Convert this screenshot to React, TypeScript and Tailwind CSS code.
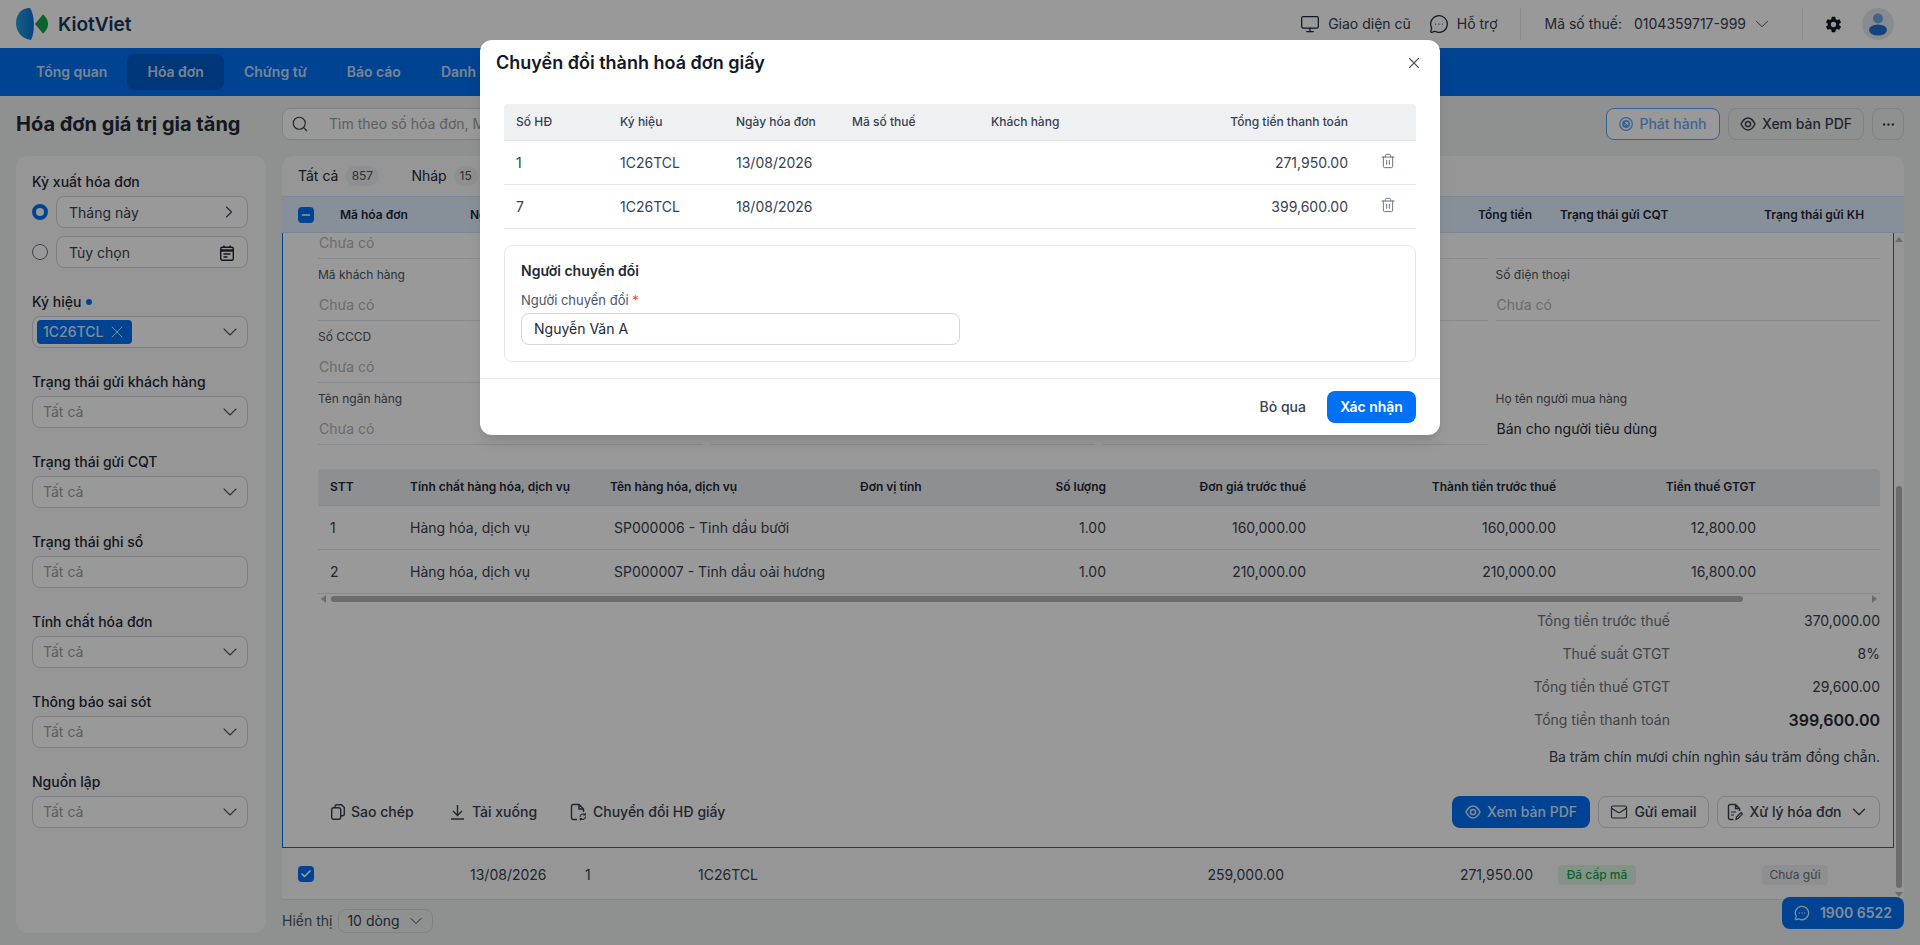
import { Check, ChevronDown, ChevronRight, Mail, MessageCircleMore, Minus, Monitor, MoreHorizontal, Search, Trash2, X } from "lucide-react";
import { IoSettingsSharp } from "react-icons/io5";

const itemCols = "grid grid-cols-[92px_200px_250px_130px_116px_200px_250px_200px_1fr] items-center";
const paperCols = "grid grid-cols-[104px_116px_116px_139px_200px_157px_1fr] items-center";

const filters = ["Trạng thái gửi khách hàng", "Trạng thái gửi CQT", "Trạng thái ghi sổ", "Tính chất hóa đơn", "Thông báo sai sót", "Nguồn lập"];

const items = [
  { no: 1, name: "SP000006 - Tinh dầu bưởi", price: "160,000.00", total: "160,000.00", tax: "12,800.00" },
  { no: 2, name: "SP000007 - Tinh dầu oải hương", price: "210,000.00", total: "210,000.00", tax: "16,800.00" },
];

const totals = [
  ["Tổng tiền trước thuế", "370,000.00"],
  ["Thuế suất GTGT", "8%"],
  ["Tổng tiền thuế GTGT", "29,600.00"],
];

const papers = [
  { no: "1", date: "13/08/2026", amount: "271,950.00" },
  { no: "7", date: "18/08/2026", amount: "399,600.00" },
];

function Logo() {
  return (
    <div className="flex items-center gap-[10px]">
      <svg width="32" height="32" viewBox="0 0 32 32">
        <defs>
          <linearGradient id="lens" x1="0" x2="1" y1="0" y2="0">
            <stop offset="0" stopColor="#26a0d6" />
            <stop offset="1" stopColor="#0a6fe0" />
          </linearGradient>
        </defs>
        <path d="M12 0 C4 1 0 8 0 15 C0 24 6 31 15 32 C19 25 19 7 14 0 Z" fill="url(#lens)" />
        <path d="M19 16 L27 6.5 C31 10 32 13 32 16 C32 19 31 22 27 25.5 Z" fill="#16a34a" />
      </svg>
      <span className="text-[19px] font-semibold leading-none text-[#0f3a66]">KiotViet</span>
    </div>
  );
}

function Avatar() {
  return (
    <div className="flex h-8 w-8 items-center justify-center rounded-full bg-[#e3e8ef]">
      <svg width="18" height="24" viewBox="0 0 18 24">
        <circle cx="9" cy="6.5" r="5" fill="#6fa5e8" />
        <ellipse cx="9" cy="18" rx="9" ry="5.5" fill="#1f6fd6" />
      </svg>
    </div>
  );
}

function EyeRing() {
  return (
    <svg width="16" height="14" viewBox="0 0 16 14" fill="none" stroke="currentColor" strokeWidth="1.5">
      <path d="M1 7C3 3 5.5 1 8 1s5 2 7 6c-2 4-4.5 6-7 6s-5-2-7-6Z" />
      <circle cx="8" cy="7" r="2.6" />
    </svg>
  );
}

function SelectBox({ text }: { text: string }) {
  return (
    <div className="flex h-8 items-center justify-between rounded-lg border border-[#d4d7dc] bg-white pl-[10px] pr-[5px] text-sm text-[#9aa0a8]">
      {text}
      <ChevronDown size={24} strokeWidth={1.1} className="text-[#4b5563]" />
    </div>
  );
}

function Radio({ on }: { on?: boolean }) {
  return on ? (
    <span className="h-4 w-4 shrink-0 rounded-full border-[4px] border-[#0070f4] bg-white" />
  ) : (
    <span className="h-4 w-4 shrink-0 rounded-full border border-[#6b7280] bg-white" />
  );
}

function Sidebar() {
  return (
    <aside className="flex h-[777px] w-[250px] shrink-0 flex-col gap-6 rounded-xl bg-[#fbfbfb] pl-4 pr-[18px] pt-4 text-sm">
      <div>
        <div className="mb-1 h-5 font-medium leading-5 text-[#1f2937]">Kỳ xuất hóa đơn</div>
        <div className="flex flex-col gap-2">
          <div className="flex items-center gap-2">
            <Radio on />
            <div className="flex h-8 flex-1 items-center justify-between rounded-lg border border-[#d4d7dc] bg-white pl-3 pr-2 pt-px text-[#374151]">
              Tháng này
              <ChevronRight size={20} strokeWidth={1.3} className="-mt-[2px]" />
            </div>
          </div>
          <div className="flex items-center gap-2">
            <Radio />
            <div className="flex h-8 flex-1 items-center justify-between rounded-lg border border-[#d4d7dc] bg-white pl-3 pr-[13px] pt-px text-[#374151]">
              Tùy chọn
              <svg width="14" height="16" viewBox="0 0 14 16" fill="none" stroke="#1f2937" strokeWidth="1.4">
                <rect x="0.7" y="2.2" width="12.6" height="13" rx="1.5" />
                <path d="M0.7 5.5H13.3" strokeWidth="2.4" />
                <path d="M4 0.5V3M10 0.5V3M3.5 9H10.5M3.5 12H7.5" />
              </svg>
            </div>
          </div>
        </div>
      </div>
      <div>
        <div className="mb-1 flex h-5 items-center gap-[5px] font-medium text-[#1f2937]">
          Ký hiệu <span className="h-[6px] w-[6px] rounded-full bg-[#0070f4]" />
        </div>
        <div className="flex h-8 items-center justify-between rounded-lg border border-[#d4d7dc] bg-white pl-1 pr-[5px]">
          <span className="flex h-6 w-[95px] items-center gap-[4px] rounded bg-[#0070f4] pl-[6px] font-medium text-[#d6e8ff]">
            1C26TCL
            <X size={20} strokeWidth={1.2} />
          </span>
          <ChevronDown size={24} strokeWidth={1.1} className="text-[#4b5563]" />
        </div>
      </div>
      {filters.map((label) => (
        <div key={label}>
          <div className="mb-1 h-5 font-medium leading-5 text-[#1f2937]">{label}</div>
          {label === "Trạng thái ghi sổ" ? (
            <div className="flex h-8 items-center rounded-lg border border-[#d4d7dc] bg-white pl-[10px] text-[#9aa0a8]">Tất cả</div>
          ) : (
            <SelectBox text="Tất cả" />
          )}
        </div>
      ))}
    </aside>
  );
}

function Field({ label, value, dark, plain }: { label?: string; value?: string; dark?: boolean; plain?: boolean }) {
  if (plain) return <div />;
  return (
    <div className="pt-[6px]">
      <div className="h-5 text-xs leading-5 text-[#4b5563]">{label}</div>
      <div className={`h-9 border-b pt-[5px] pl-px text-sm leading-[30px] ${dark ? "border-transparent text-[#1f2937]" : "border-[#e5e7eb] text-[#b0b4ba]"}`}>{value || "Chưa có"}</div>
    </div>
  );
}

function Expanded() {
  return (
    <div className="h-[615px] border-x border-b border-[#0070f4] bg-white pl-[35px] pr-[13px]">
      <div className="grid grid-cols-4 gap-x-2">
        {[0, 1, 2, 3].map((i) => (
          <div key={i} className="h-[26px] border-b border-[#e5e7eb] pl-px text-sm leading-5 text-[#b0b4ba]">
            {i === 0 ? "Chưa có" : ""}
          </div>
        ))}
        <Field label="Mã khách hàng" />
        <Field label="Địa chỉ" />
        <Field label="Email" />
        <Field label="Số điện thoại" />
        <Field label="Số CCCD" />
        <Field plain />
        <Field plain />
        <Field plain />
        <Field label="Tên ngân hàng" />
        <Field label="Số tài khoản" />
        <Field label="Tên đơn vị" />
        <Field label="Họ tên người mua hàng" value="Bán cho người tiêu dùng" dark />
      </div>

      <div className={`${itemCols} mt-6 h-[37px] rounded-t border-b border-[#e3e5e8] bg-[#eceef1] text-xs font-semibold text-[#1f2937]`}>
        <span className="pl-3">STT</span>
        <span>Tính chất hàng hóa, dịch vụ</span>
        <span>Tên hàng hóa, dịch vụ</span>
        <span>Đơn vị tính</span>
        <span className="text-right">Số lượng</span>
        <span className="text-right">Đơn giá trước thuế</span>
        <span className="text-right">Thành tiền trước thuế</span>
        <span className="text-right">Tiền thuế GTGT</span>
      </div>
      {items.map((row) => (
        <div key={row.no} className={`${itemCols} h-11 border-b border-[#e5e7eb] text-sm text-[#374151]`}>
          <span className="pl-3">{row.no}</span>
          <span>Hàng hóa, dịch vụ</span>
          <span className="pl-1">{row.name}</span>
          <span />
          <span className="text-right">1.00</span>
          <span className="text-right">{row.price}</span>
          <span className="text-right">{row.total}</span>
          <span className="text-right">{row.tax}</span>
        </div>
      ))}
      <div className="flex h-[10px] items-center justify-between px-[3px]">
        <span className="h-0 w-0 border-y-[4px] border-r-[5px] border-y-transparent border-r-[#b5b5b5]" />
        <span className="ml-[5px] mr-auto h-[6px] w-[1412px] rounded-full bg-[#b5b5b5]" />
        <span className="h-0 w-0 border-y-[4px] border-l-[5px] border-y-transparent border-l-[#b5b5b5]" />
      </div>

      <div className="flex flex-col">
        {totals.map(([label, value]) => (
          <div key={label} className="flex h-[33px] items-center justify-end text-sm">
            <span className="text-[#6b7280]">{label}</span>
            <span className="w-[210px] text-right text-[#374151]">{value}</span>
          </div>
        ))}
        <div className="flex h-[33px] items-center justify-end">
          <span className="text-sm text-[#6b7280]">Tổng tiền thanh toán</span>
          <span className="w-[210px] text-right text-base font-semibold text-[#1f2937]">399,600.00</span>
        </div>
      </div>
      <div className="mt-[11px] h-5 text-right text-sm leading-5 text-[#374151]">Ba trăm chín mươi chín nghìn sáu trăm đồng chẵn.</div>

      <div className="mt-[29px] flex items-center justify-between text-sm font-medium text-[#374151]">
        <div className="flex items-center pl-[13px]">
          <span className="flex w-[119px] items-center gap-[6px]">
            <svg width="14" height="16" viewBox="0 0 14 16" fill="none" stroke="#374151" strokeWidth="1.4">
              <rect x="0.7" y="3.8" width="9" height="11.5" rx="2" />
              <path d="M4 3.5V2.5A1.8 1.8 0 0 1 5.8 0.7H10.5L13.3 3.5V10A1.8 1.8 0 0 1 11.5 11.8H9.7" />
            </svg>
            Sao chép
          </span>
          <span className="flex w-[120px] items-center gap-[7px]">
            <svg width="15" height="16" viewBox="0 0 15 16" fill="none" stroke="#374151" strokeWidth="1.4">
              <path d="M7.5 1V11M3 7l4.5 4.5L12 7M1 15H14" />
            </svg>
            Tải xuống
          </span>
          <span className="flex items-center gap-[6px]">
            <svg width="17" height="18" viewBox="0 0 17 18" fill="none" stroke="#374151" strokeWidth="1.4">
              <path d="M7 16.5H3a1.5 1.5 0 0 1-1.5-1.5V3A1.5 1.5 0 0 1 3 1.5h6L13.5 6v3M9 1.5V6h4.5" />
              <path d="M10 14a3 3 0 0 1 5-2.2M15.5 13.5a3 3 0 0 1-5 2.2M15.3 10v2h-2M10.2 17.5v-2h2" strokeWidth="1.1" />
            </svg>
            Chuyển đổi HĐ giấy
          </span>
        </div>
        <div className="flex items-center gap-2">
          <span className="flex h-8 w-[138px] items-center justify-center gap-[6px] rounded-lg bg-[#0070f4] text-[#dbeaff]">
            <EyeRing /> Xem bản PDF
          </span>
          <span className="flex h-8 w-[111px] items-center justify-center gap-[6px] rounded-lg border border-[#d4d7dc]">
            <Mail size={18} strokeWidth={1.6} /> Gửi email
          </span>
          <span className="flex h-8 w-[163px] items-center justify-center gap-[6px] rounded-lg border border-[#d4d7dc]">
            <svg width="16" height="18" viewBox="0 0 16 18" fill="none" stroke="#374151" strokeWidth="1.4">
              <path d="M6.5 16.5H3a1.5 1.5 0 0 1-1.5-1.5V3A1.5 1.5 0 0 1 3 1.5h5.5L12.5 5.5V8M8.5 1.5V5.5h4" />
              <path d="M4 9H9M4 12H7" strokeWidth="1.2" />
              <path d="M9 16.5L9.5 14L14 9.5L15.5 11L11 15.5Z" strokeWidth="1.2" />
            </svg>
            Xử lý hóa đơn
            <ChevronDown size={22} strokeWidth={1.4} />
          </span>
        </div>
      </div>
    </div>
  );
}

function InvoicePanel() {
  return (
    <div className="flex h-[744px] flex-col overflow-hidden rounded-t-xl border-b border-[#dfe1e3] bg-[#fbfbfb]">
      <div className="flex h-10 items-center gap-8 pl-4 text-sm text-[#1f2937]">
        <span className="flex items-center gap-[7px]">
          Tất cả <span className="flex h-5 w-[34px] items-center justify-center rounded-full bg-[#eceef1] text-xs text-[#4b5563]">857</span>
        </span>
        <span className="flex items-center gap-[7px]">
          Nháp <span className="flex h-5 w-6 items-center justify-center rounded-full bg-[#eceef1] text-xs text-[#4b5563]">15</span>
        </span>
      </div>
      <div className="flex h-[37px] shrink-0 items-center border-y border-[#cfe3f8] bg-[#e2f0ff] pl-4 text-xs font-semibold text-[#1f2937]">
        <span className="flex h-4 w-4 items-center justify-center rounded bg-[#0070f4] text-white">
          <Minus size={12} strokeWidth={3} />
        </span>
        <span className="ml-[26px] w-[130px]">Mã hóa đơn</span>
        <span className="w-[1008px]">Ngày hóa đơn</span>
        <span className="w-[82px]">Tổng tiền</span>
        <span className="w-[204px]">Trạng thái gửi CQT</span>
        <span>Trạng thái gửi KH</span>
      </div>
      <div className="flex min-h-0 flex-1">
        <div className="min-w-0 flex-1">
          <Expanded />
          <div className="flex h-[52px] items-center pl-4 pt-px text-sm text-[#374151]">
            <span className="-mt-px flex h-4 w-4 items-center justify-center rounded bg-[#0070f4] text-white">
              <Check size={12} strokeWidth={3.5} />
            </span>
            <span className="ml-[156px] w-[115px]">13/08/2026</span>
            <span className="w-[113px]">1</span>
            <span className="w-[506px]">1C26TCL</span>
            <span className="w-[80px] text-right">259,000.00</span>
            <span className="w-[249px] text-right">271,950.00</span>
            <span className="ml-[25px] flex h-5 w-[78px] items-center justify-center rounded bg-[#dcf5e3] text-xs font-medium text-[#16a34a]">Đã cấp mã</span>
            <span className="ml-[126px] flex h-5 w-[66px] items-center justify-center rounded bg-[#eceef1] text-xs text-[#6b7280]">Chưa gửi</span>
          </div>
        </div>
        <div className="flex w-[10px] shrink-0 flex-col items-center bg-[#fbfbfb] pt-1">
          <span className="h-0 w-0 border-x-[4px] border-b-[5px] border-x-transparent border-b-[#b5b5b5]" />
          <span className="mt-[244px] h-[402px] w-[6px] rounded-full bg-[#b5b5b5]" />
          <span className="mt-[4px] h-0 w-0 border-x-[4px] border-t-[5px] border-x-transparent border-t-[#b5b5b5]" />
        </div>
      </div>
    </div>
  );
}

function Modal() {
  return (
    <div className="absolute inset-0 flex justify-center bg-black/40 pt-10">
      <div className="h-[395px] w-[960px] rounded-xl bg-white shadow-lg">
        <div className="mb-[18px] flex h-[46px] items-center justify-between pl-4 pr-[17px]">
          <h2 className="text-lg font-semibold text-[#111827]">Chuyển đổi thành hoá đơn giấy</h2>
          <X size={18} strokeWidth={1.5} className="text-[#4b5563]" />
        </div>
        <div className="mx-6">
          <div className={`${paperCols} h-[37px] rounded-t border-b border-[#e3e5e8] bg-[#eff0f2] pl-3 text-xs font-medium text-[#374151]`}>
            <span>Số HĐ</span>
            <span>Ký hiệu</span>
            <span>Ngày hóa đơn</span>
            <span>Mã số thuế</span>
            <span>Khách hàng</span>
            <span className="text-right">Tổng tiền thanh toán</span>
          </div>
          {papers.map((row) => (
            <div key={row.no} className={`${paperCols} h-11 border-b border-[#e5e7eb] pl-3 text-sm text-[#374151]`}>
              <span>{row.no}</span>
              <span>1C26TCL</span>
              <span>{row.date}</span>
              <span />
              <span />
              <span className="text-right">{row.amount}</span>
              <span className="pl-8">
                <Trash2 size={16} strokeWidth={1.5} className="-mt-[3px] text-[#6b7280]" />
              </span>
            </div>
          ))}
          <div className="mt-4 h-[117px] rounded-lg border border-[#e5e7eb] px-4 pt-[15px]">
            <div className="h-5 text-sm font-semibold leading-5 text-[#1f2937]">Người chuyển đổi</div>
            <div className="mt-[9px] h-5 text-[13px] leading-5 text-[#4b5563]">
              Người chuyển đổi <span className="text-[#ef4444]">*</span>
            </div>
            <div className="mt-[3px] flex h-8 w-[439px] items-center rounded-lg border border-[#d1d5db] pl-3 text-sm text-[#1f2937]">Nguyễn Văn A</div>
          </div>
        </div>
        <div className="mt-4 flex items-center justify-end gap-[21px] border-t border-[#e5e7eb] pb-3 pr-6 pt-3 text-sm">
          <span className="font-medium text-[#374151]">Bỏ qua</span>
          <span className="flex h-8 w-[89px] items-center justify-center rounded-lg bg-[#0070f4] font-semibold text-white">Xác nhận</span>
        </div>
      </div>
    </div>
  );
}

export default function App() {
  return (
    <div className="relative h-[945px] w-full overflow-hidden bg-[#eff1f1] font-['Inter',sans-serif] text-sm">
      <header className="flex h-12 items-center justify-between bg-white pl-4 pr-[26px] text-[#374151]">
        <Logo />
        <div className="flex items-center">
          <Monitor size={20} strokeWidth={1.5} className="text-[#1f2937]" />
          <span className="ml-2">Giao diện cũ</span>
          <MessageCircleMore size={20} strokeWidth={1.5} className="ml-[18px] text-[#1f2937]" />
          <span className="ml-2">Hỗ trợ</span>
          <span className="ml-[22px] h-8 w-px bg-[#e5e7eb]" />
          <span className="ml-6">Mã số thuế:</span>
          <span className="ml-3">0104359717-999</span>
          <ChevronDown size={22} strokeWidth={1} className="ml-[5px]" />
          <span className="ml-[29px] h-8 w-px bg-[#e5e7eb]" />
          <IoSettingsSharp size={17} className="ml-[22px] mr-5 text-[#111827]" />
          <Avatar />
        </div>
      </header>

      <nav className="flex h-12 items-center bg-[#0070f4] pl-4 text-sm font-semibold text-[#c9dcf5]">
        {["Tổng quan", "Hóa đơn", "Chứng từ", "Báo cáo", "Danh mục"].map((tab) => (
          <span key={tab} className={`flex h-9 items-center rounded-lg px-5 ${tab === "Hóa đơn" ? "bg-[#005cc8]" : ""}`}>
            {tab}
          </span>
        ))}
      </nav>

      <div className="mt-3 flex h-8 items-center gap-4 px-4">
        <h1 className="w-[250px] shrink-0 text-xl font-bold text-[#1f2937]">Hóa đơn giá trị gia tăng</h1>
        <div className="flex h-8 w-[1000px] items-center gap-5 rounded-lg border border-[#d4d7dc] bg-white pl-2 text-[#9aa0a8]">
          <Search size={18} strokeWidth={1.5} className="text-[#374151]" />
          Tìm theo số hóa đơn, Mã hóa đơn, Mã số thuế
        </div>
        <div className="ml-auto flex items-center gap-2 font-medium">
          <span className="flex h-8 w-[114px] items-center justify-center gap-[6px] rounded-lg border border-[#5aa2f7] bg-white text-[#6aa8f5]">
            <svg width="14" height="14" viewBox="0 0 14 14">
              <circle cx="7" cy="7" r="6.3" fill="none" stroke="#6aa8f5" strokeWidth="1.3" />
              <circle cx="7" cy="7" r="4" fill="#6aa8f5" />
              <path d="M5.5 8.5L8.5 5.5M6 5.5H8.5V8" stroke="#fff" strokeWidth="0.9" fill="none" />
            </svg>
            Phát hành
          </span>
          <span className="flex h-8 w-[136px] items-center justify-center gap-[6px] rounded-lg border border-[#d4d7dc] text-[#374151]">
            <EyeRing /> Xem bản PDF
          </span>
          <span className="flex h-8 w-8 items-center justify-center rounded-lg border border-[#d4d7dc] text-[#374151]">
            <MoreHorizontal size={15} />
          </span>
        </div>
      </div>

      <div className="mt-4 flex gap-4 px-4">
        <Sidebar />
        <div className="min-w-0 flex-1">
          <InvoicePanel />
          <div className="mt-[9px] flex items-center gap-[6px] text-sm text-[#4b5563]">
            Hiển thị
            <span className="flex h-6 w-[95px] items-center justify-between rounded-lg border border-[#d4d7dc] pl-2 pr-[6px] text-[#374151]">
              10 dòng
              <ChevronDown size={20} strokeWidth={1.2} />
            </span>
          </div>
        </div>
      </div>

      <div className="absolute right-4 top-[897px] flex h-8 w-[122px] items-center justify-center gap-[10px] rounded-lg bg-[#0070f4] text-sm font-semibold text-[#dbeaff]">
        <MessageCircleMore size={16} strokeWidth={2} /> 1900 6522
      </div>

      <Modal />
    </div>
  );
}
